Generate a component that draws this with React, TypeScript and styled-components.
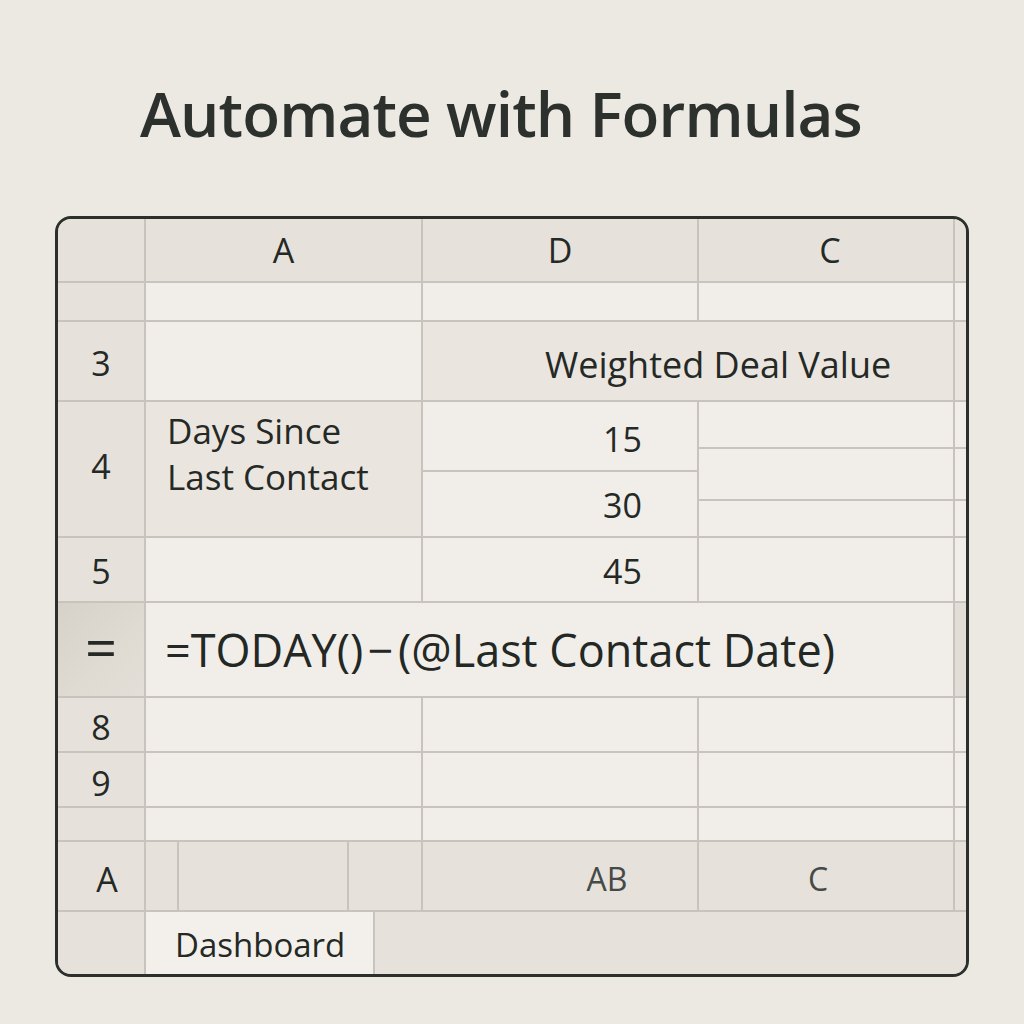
import React from 'react';
import styled, { createGlobalStyle, css } from 'styled-components';

const Global = createGlobalStyle`
  html, body { margin: 0; padding: 0; background: #ece8e2; }
  body { font-family: "Open Sans", "Noto Sans", sans-serif; color: #272c29; }
`;

const Page = styled.div`
  width: 1024px;
  height: 1024px;
  overflow: hidden;
  background: #ece8e2;
`;

const Title = styled.h1`
  margin: 0;
  padding: 73px 0 0 140px;
  font-size: 62px;
  font-weight: 600;
  letter-spacing: -0.9px;
  line-height: 80px;
  color: #2c312e;
`;

const Card = styled.div`
  margin: 63px 0 0 55px;
  width: 914px;
  box-sizing: border-box;
  border: 3px solid #2b302d;
  border-radius: 16px;
  overflow: hidden;
  background: #c8c3bc;
  display: flex;
  flex-direction: column;
  gap: 2px;
`;

const Row = styled.div<{ $cols: string; $h: number }>`
  display: grid;
  grid-template-columns: ${(p) => p.$cols};
  gap: 2px;
  height: ${(p) => p.$h}px;
`;

const Stack = styled.div<{ $span?: number }>`
  display: flex;
  flex-direction: column;
  gap: 2px;
  grid-column: span ${(p) => p.$span ?? 1};
`;

const SubRow = styled.div<{ $h: number }>`
  display: grid;
  grid-template-columns: 254px 11px;
  gap: 2px;
  height: ${(p) => p.$h}px;
`;

type Tone = 'head' | 'light' | 'mid' | 'eq' | 'tab' | 'strip';

const tones: Record<Tone, ReturnType<typeof css>> = {
  head: css`background: #e6e1da;`,
  light: css`background: #f1eee9;`,
  mid: css`background: #eae5de;`,
  eq: css`background: linear-gradient(135deg, #d6d1c9 0%, #dfdad2 60%, #e3ded7 100%);`,
  tab: css`background: #f3f0eb;`,
  strip: css`background: #e2ddd6;`,
};

const Cell = styled.div<{
  $tone?: Tone;
  $size?: number;
  $justify?: 'flex-start' | 'center' | 'flex-end';
  $pl?: number;
  $pr?: number;
  $pt?: number;
  $pb?: number;
  $color?: string;
  $weight?: number;
}>`
  ${(p) => tones[p.$tone ?? 'light']}
  display: flex;
  align-items: center;
  justify-content: ${(p) => p.$justify ?? 'center'};
  padding: ${(p) => p.$pt ?? 0}px ${(p) => p.$pr ?? 0}px ${(p) => p.$pb ?? 0}px ${(p) => p.$pl ?? 0}px;
  font-size: ${(p) => p.$size ?? 34}px;
  font-weight: ${(p) => p.$weight ?? 500};
  color: ${(p) => p.$color ?? '#242926'};
  line-height: 1.2;
  white-space: nowrap;
  min-width: 0;
  flex: 1;
`;

const WrapText = styled.div`
  align-self: flex-start;
  padding-top: 6px;
  font-size: 35px;
  line-height: 46px;
  white-space: normal;
`;

const BASE = '86px 275px 274px 254px 11px';

export default function App() {
  return (
    <Page>
      <Global />
      <Title>Automate with Formulas</Title>
      <Card>
        <Row $cols={BASE} $h={62}>
          <Cell $tone="head" />
          <Cell $tone="head" $weight={400}>A</Cell>
          <Cell $tone="head" $weight={400}>D</Cell>
          <Cell $tone="head" $weight={400} $pl={8}>C</Cell>
          <Cell $tone="head" />
        </Row>

        <Row $cols={BASE} $h={37}>
          <Cell $tone="head" />
          <Cell $tone="light" />
          <Cell $tone="light" />
          <Cell $tone="light" />
          <Cell $tone="light" />
        </Row>

        <Row $cols="86px 275px 530px 11px" $h={78}>
          <Cell $tone="head" $pt={4}>3</Cell>
          <Cell $tone="light" />
          <Cell $tone="mid" $size={36} $justify="flex-start" $pl={122} $pt={8}>
            Weighted Deal Value
          </Cell>
          <Cell $tone="mid" />
        </Row>

        <Row $cols={BASE} $h={134}>
          <Cell $tone="head" $pb={6}>4</Cell>
          <Cell $tone="mid" $justify="flex-start" $pl={21}>
            <WrapText>
              Days Since
              <br />
              Last Contact
            </WrapText>
          </Cell>
          <Stack>
            <Cell $tone="light" $justify="flex-end" $pr={55} $pt={6}>15</Cell>
            <Cell $tone="light" $justify="flex-end" $pr={55} $pt={2}>30</Cell>
          </Stack>
          <Stack $span={2}>
            <SubRow $h={45}>
              <Cell $tone="light" />
              <Cell $tone="light" />
            </SubRow>
            <SubRow $h={50}>
              <Cell $tone="light" />
              <Cell $tone="light" />
            </SubRow>
            <SubRow $h={35}>
              <Cell $tone="light" />
              <Cell $tone="light" />
            </SubRow>
          </Stack>
        </Row>

        <Row $cols={BASE} $h={63}>
          <Cell $tone="head" $pt={4}>5</Cell>
          <Cell $tone="light" />
          <Cell $tone="light" $justify="flex-end" $pr={55} $pt={4}>45</Cell>
          <Cell $tone="light" />
          <Cell $tone="light" />
        </Row>

        <Row $cols="86px 807px 11px" $h={93}>
          <Cell $tone="eq" $size={56} $weight={400} $pb={6}>=</Cell>
          <Cell $tone="light" $size={45} $justify="flex-start" $pl={19} $color="#232825">
            =TODAY()&#8202;−&#8202;(@Last Contact Date)
          </Cell>
          <Cell $tone="strip" />
        </Row>

        <Row $cols={BASE} $h={53}>
          <Cell $tone="head" $pt={6}>8</Cell>
          <Cell $tone="light" />
          <Cell $tone="light" />
          <Cell $tone="light" />
          <Cell $tone="light" />
        </Row>

        <Row $cols={BASE} $h={53}>
          <Cell $tone="head" $pt={8}>9</Cell>
          <Cell $tone="light" />
          <Cell $tone="light" />
          <Cell $tone="light" />
          <Cell $tone="light" />
        </Row>

        <Row $cols={BASE} $h={32}>
          <Cell $tone="head" />
          <Cell $tone="light" />
          <Cell $tone="light" />
          <Cell $tone="light" />
          <Cell $tone="light" />
        </Row>

        <Row $cols="86px 31px 168px 72px 274px 254px 11px" $h={68}>
          <Cell $tone="head" $pl={12} $pt={6} $weight={400}>A</Cell>
          <Cell $tone="head" />
          <Cell $tone="head" />
          <Cell $tone="head" />
          <Cell $tone="head" $size={32} $pl={94} $pt={6} $weight={400} $color="#464a47">AB</Cell>
          <Cell $tone="head" $size={32} $pr={16} $pt={6} $weight={400} $color="#464a47">C</Cell>
          <Cell $tone="head" />
        </Row>

        <Row $cols="86px 227px 591px" $h={62}>
          <Cell $tone="head" />
          <Cell $tone="tab" $size={33} $justify="flex-start" $pl={29} $pt={4}>Dashboard</Cell>
          <Cell $tone="head" />
        </Row>
      </Card>
    </Page>
  );
}
